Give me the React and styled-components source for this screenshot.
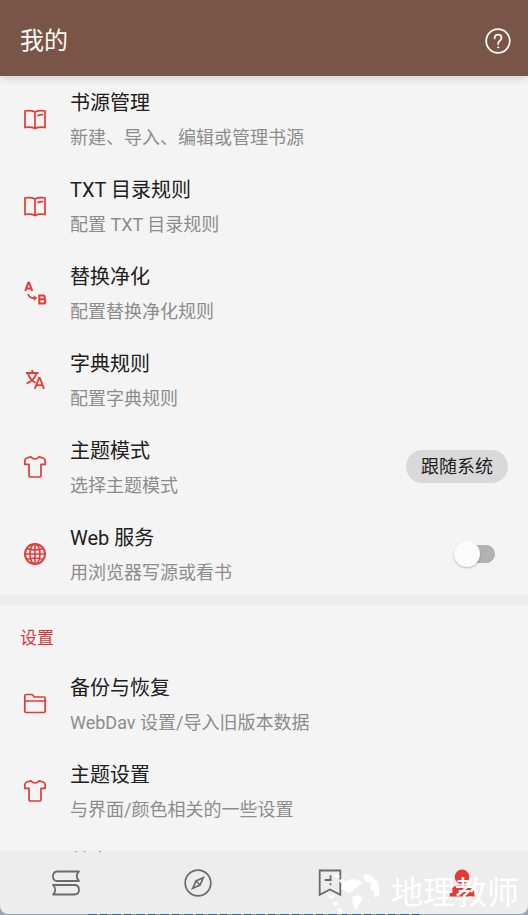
import React, { useState } from "react";
import styled, { createGlobalStyle } from "styled-components";

const GlobalStyle = createGlobalStyle`
  * { box-sizing: border-box; }
  body { margin: 0; background: #a9b1ba; }
  button, input { font: inherit; }
`;

const Page = styled.div`
  display: flex;
  flex-direction: column;
  height: 100vh;
  overflow: hidden;
  position: relative;
  background: #f4f4f4;
  color: #202020;
  font-family: Roboto, "Noto Sans CJK SC", sans-serif;
  font-weight: 400;
`;

const TopBar = styled.header`
  display: flex;
  align-items: center;
  justify-content: space-between;
  flex: none;
  height: 75px;
  padding: 6px 16px 0 20px;
  background: #795548;
  color: #fffaf4;
  box-shadow: 0 1px 0 #795548, 0 2px 9px rgba(0, 0, 0, 0.2);
  z-index: 1;
`;

const PageTitle = styled.h1`
  margin: 0;
  font-size: 24px;
  line-height: 32px;
  font-weight: 400;
`;

const IconButton = styled.button`
  display: flex;
  padding: 0;
  border: 0;
  background: none;
  color: inherit;
`;

const Content = styled.main`
  flex: 1;
  min-height: 0;
  overflow: hidden;
`;

const Group = styled.section`
  margin-bottom: -2px;
`;

const Divider = styled.hr`
  height: 10px;
  margin: 0;
  border: 0;
  background: #eeeeee;
`;

const GroupTitle = styled.h2`
  margin: 0;
  padding: 20px 20px 9px;
  color: #d8383c;
  font-size: 17px;
  line-height: 26px;
  font-weight: 400;
`;

const Row = styled.div`
  display: flex;
  align-items: center;
  gap: 20px;
  height: 87px;
  padding: 0 20px;
`;

const RowIcon = styled.span`
  display: flex;
  justify-content: center;
  flex: none;
  width: 30px;
  color: #e53935;
`;

const RowText = styled.div`
  flex: 1;
  display: flex;
  flex-direction: column;
  gap: 7px;
  padding-top: 2px;
  white-space: nowrap;
`;

const RowTitle = styled.span`
  font-size: 20px;
  line-height: 30px;
`;

const RowNote = styled.span`
  min-height: 26px;
  color: #8c8c8c;
  font-size: 18px;
  line-height: 26px;
`;

const Chip = styled.button`
  padding: 0 15px;
  border: 0;
  border-radius: 17px;
  background: #d9d9d9;
  color: #202020;
  font-size: 18px;
  line-height: 33px;
`;

const Switch = styled.input`
  appearance: none;
  flex: none;
  display: flex;
  align-items: center;
  justify-content: ${(p) => (p.checked ? "flex-end" : "flex-start")};
  width: 41px;
  height: 26px;
  margin: 0 13px 0 0;
  border-radius: 13px;
  background: linear-gradient(#b2b2b2, #b2b2b2) right center / 28px 18px no-repeat;
  background: radial-gradient(circle at 32px 13px, #b2b2b2 9px, transparent 9px),
    linear-gradient(#b2b2b2, #b2b2b2) 10px 4px / 22px 18px no-repeat;

  &::before {
    content: "";
    width: 26px;
    height: 26px;
    border-radius: 50%;
    background: #fcfcfc;
    box-shadow: 0 1px 2px rgba(0, 0, 0, 0.25);
  }
`;

const BottomArea = styled.div`
  flex: none;
  background: #9aa7b4;
`;

const TabBar = styled.nav`
  display: grid;
  grid-template-columns: repeat(4, 1fr);
  height: 62px;
  border-radius: 0 0 8px 8px;
  background: #ededed;
  box-shadow: 0 0 4px rgba(0, 0, 0, 0.06);
`;

const Tab = styled.button`
  display: flex;
  align-items: center;
  justify-content: center;
  padding: 0;
  border: 0;
  background: none;
  color: ${(p) => (p.$active ? "#e53935" : "#6b6b6b")};
`;

const EdgeMarks = styled.div`
  height: 1px;
  margin: 0 108px 0 88px;
  background: repeating-linear-gradient(
    90deg,
    #46618c 0 9px,
    #a9b1ba 9px 12px,
    #38517f 12px 19px,
    #8594a8 19px 24px
  );
`;

const Watermark = styled.div`
  position: absolute;
  right: 9px;
  bottom: 0;
  display: flex;
  align-items: center;
  gap: 7px;
  color: #fff;
  font-size: 32px;
  line-height: 44px;
  font-weight: 400;
  pointer-events: none;
`;

const Drawing = ({ size = 24, stroke = 1.7, children }) => (
  <svg width={size} height={size} viewBox={`0 0 ${size} ${size}`} fill="none" stroke="currentColor"
    strokeWidth={stroke} strokeLinejoin="round" strokeLinecap="round" aria-hidden="true">
    {children}
  </svg>
);

const BookIcon = () => (
  <Drawing>
    <path strokeLinejoin="miter" d="M2 4 Q8 3 12 5 Q16 3 22 4 V20.5 Q16 19.5 12 21.5 Q8 19.5 2 20.5 Z M12 5 V21" />
    <path d="M15 8.5 Q17 7.6 19.5 7.7" />
  </Drawing>
);

const ReplaceIcon = () => (
  <Drawing stroke={2}>
    <path strokeLinejoin="miter" strokeLinecap="butt" d="M2.2 10 L5.3 1.8 H6.2 L9.3 10 M3.4 7.4 H8.2" />
    <path strokeWidth="1.7" d="M5.2 13.5 Q6.5 17.5 12 17" />
    <path fill="currentColor" stroke="none" d="M10.7 14.3 L14.3 17 L10.7 19.8 Z" />
    <path strokeLinejoin="miter" d="M16.3 14.5 H19.8 Q21.8 14.5 21.8 16.4 Q21.8 18.3 19.8 18.3 H16.3 H20 Q22.4 18.3 22.4 20.4 Q22.4 22.5 20 22.5 H16.3 Z" />
  </Drawing>
);

const TranslateIcon = () => (
  <Drawing stroke={1.8}>
    <path strokeLinecap="butt" d="M3 5 H15.5 M9 2 L10 5 M5 5.5 Q6.5 11.5 12.5 14.7 M13.2 5.5 Q11.5 12.5 3.5 15.5" />
    <path strokeLinecap="butt" strokeLinejoin="miter" d="M11.8 20.8 L16 10 H16.8 L21 20.8 M13.3 17.2 H19.5" />
  </Drawing>
);

const ShirtIcon = () => (
  <Drawing>
    <path d="M8 1.9 Q9.5 4 12 4 Q14.5 4 16 1.9 L20.2 3 Q22.2 3.8 22.2 6 V9.3 H18 V20.3 Q18 22 16.3 22 H7.7 Q6 22 6 20.3 V9.3 H1.8 V6 Q1.8 3.8 3.8 3 Z" />
  </Drawing>
);

const GlobeIcon = () => (
  <Drawing stroke={1.6}>
    <circle cx="12" cy="12" r="10" strokeWidth="1.9" />
    <ellipse cx="12" cy="12" rx="5" ry="10" />
    <path d="M12 2 V22 M2 12 H22 M4 6.5 Q12 9.5 20 6.5 M4 17.5 Q12 14.5 20 17.5" />
  </Drawing>
);

const FolderIcon = () => (
  <Drawing>
    <path d="M1.8 8.5 V4 Q1.8 2.5 3.3 2.5 H8.4 Q9.2 2.5 10 3.5 L11.2 5 H20.7 Q22.2 5 22.2 6.5 V19 Q22.2 20.5 20.7 20.5 H3.3 Q1.8 20.5 1.8 19 Z M2 9 H22" />
  </Drawing>
);

const HelpIcon = () => (
  <Drawing size={28} stroke={1.8}>
    <circle cx="14" cy="14" r="11.8" />
    <path d="M10.6 11.4 Q10.6 7.6 14 7.6 Q17.5 7.6 17.5 10.8 Q17.5 12.5 15.8 13.7 Q14.1 14.9 14.1 17" />
    <circle cx="14.1" cy="20.3" r="0.6" fill="currentColor" strokeWidth="1" />
  </Drawing>
);

const ShelfIcon = () => (
  <Drawing size={30} stroke={1.8}>
    <path d="M28 3.5 H6.5 Q2 3.5 2 8.2 Q2 13 6.5 13 H28 Q23.5 8.2 28 3.5 Z M2 17 H23.5 Q28 17 28 21.8 Q28 26.5 23.5 26.5 H2 Q6.5 21.8 2 17 Z" />
  </Drawing>
);

const CompassIcon = () => (
  <Drawing size={30} stroke={1.7}>
    <circle cx="15" cy="15" r="12.8" />
    <path strokeLinejoin="miter" d="M20.3 9.7 L17 17 L9.7 20.3 L13 13 Z M13 13 L17 17" />
  </Drawing>
);

const BookmarkIcon = () => (
  <Drawing size={30} stroke={1.8}>
    <path strokeLinejoin="miter" d="M4.7 2.5 H25.3 V26.8 L15 21.5 L4.7 26.8 Z" />
    <path d="M10.5 12 H16 M15.5 8 V10.5 M15.5 15.8 V16.4" />
  </Drawing>
);

const PersonIcon = () => (
  <Drawing size={30} stroke={0}>
    <circle cx="15" cy="8.8" r="7.3" fill="currentColor" />
    <path fill="currentColor" d="M2.5 28.5 Q2.5 18 11 17.5 H19 Q27.5 18 27.5 28.5 Z" />
  </Drawing>
);

const EarthMark = () => (
  <svg width="60" height="44" viewBox="0 0 60 44" fill="currentColor" aria-hidden="true">
    <path d="M14 9 L19 8 L22 11 L27 8 L35 9 L38 12 L34 16 L31 17 L28 21 L23 22 L20 19 L17 18 L18 13 Z" />
    <path d="M28 26 L34 24 L39 27 L36 32 L32 40 L29 33 Z" />
    <path d="M39 5 Q43 1 49 6 Q57 13 55 24 L51 27 L50 21 L46 18 L47 12 L41 10 Z" />
    <path d="M3 23 l4 2 3 -2 1 3 -5 2z M8 32 l4 -2 3 3 -4 2z M13 39 l3 -2 3 4 -2 3z M10 4 l4 -1 2 3 -4 1z" />
  </svg>
);

const services = [
  { title: "书源管理", note: "新建、导入、编辑或管理书源", Icon: BookIcon },
  { title: "TXT 目录规则", note: "配置 TXT 目录规则", Icon: BookIcon },
  { title: "替换净化", note: "配置替换净化规则", Icon: ReplaceIcon },
  { title: "字典规则", note: "配置字典规则", Icon: TranslateIcon },
  { title: "主题模式", note: "选择主题模式", Icon: ShirtIcon, control: "theme" },
  { title: "Web 服务", note: "用浏览器写源或看书", Icon: GlobeIcon, control: "switch" },
];

const settings = [
  { title: "备份与恢复", note: "WebDav 设置/导入旧版本数据", Icon: FolderIcon },
  { title: "主题设置", note: "与界面/颜色相关的一些设置", Icon: ShirtIcon },
  { title: "基本设置" },
];

const tabs = [
  { label: "书架", Icon: ShelfIcon },
  { label: "发现", Icon: CompassIcon },
  { label: "订阅", Icon: BookmarkIcon },
  { label: "我的", Icon: PersonIcon, active: true },
];

function SettingRow({ title, note, Icon, control }) {
  const [on, setOn] = useState(false);
  return (
    <Row>
      <RowIcon>{Icon && <Icon />}</RowIcon>
      <RowText>
        <RowTitle>{title}</RowTitle>
        <RowNote>{note}</RowNote>
      </RowText>
      {control === "theme" && <Chip type="button">跟随系统</Chip>}
      {control === "switch" && (
        <Switch type="checkbox" role="switch" aria-label={title} checked={on}
          onChange={(e) => setOn(e.target.checked)} />
      )}
    </Row>
  );
}

export default function App() {
  return (
    <Page>
      <GlobalStyle />
      <TopBar>
        <PageTitle>我的</PageTitle>
        <IconButton type="button" aria-label="帮助"><HelpIcon /></IconButton>
      </TopBar>
      <Content>
        <Group>
          {services.map((item) => <SettingRow key={item.title} {...item} />)}
        </Group>
        <Divider />
        <Group>
          <GroupTitle>设置</GroupTitle>
          {settings.map((item) => <SettingRow key={item.title} {...item} />)}
        </Group>
      </Content>
      <BottomArea>
        <TabBar>
          {tabs.map(({ label, Icon, active }) => (
            <Tab key={label} type="button" aria-label={label} $active={active}><Icon /></Tab>
          ))}
        </TabBar>
        <EdgeMarks />
      </BottomArea>
      <Watermark><EarthMark />地理教师</Watermark>
    </Page>
  );
}
